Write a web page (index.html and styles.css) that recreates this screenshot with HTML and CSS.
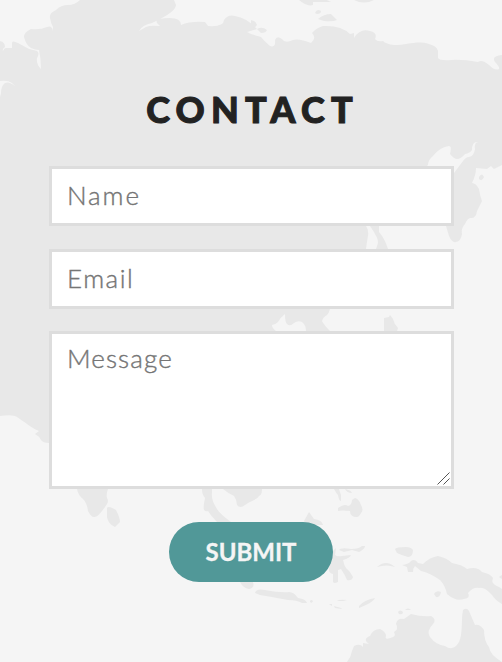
FILE: index.html
```html
<!DOCTYPE html>
<html lang="en">
<head>
<meta charset="utf-8">
<meta name="viewport" content="width=device-width, initial-scale=1">
<title>Contact</title>
<link rel="stylesheet" href="styles.css">
</head>
<body>
<section class="contact">
  <svg class="map" viewBox="0 0 502 662" aria-hidden="true">
    <!-- Asia -->
    <path d="M80 0Q75 5 68 5Q61 5 56 10Q49 13 50 18Q51 24 53 27V31Q52 25 47 27Q40 30 31 29Q24 32 24 37Q26 45 31 48Q35 50 39 50Q41 59 41 69Q36 64 37 58Q40 53 37 51L29 49Q22 45 18 43Q12 40 12 43V48H6Q4 48 3 51Q2 49 5 47Q5 42 0 41V81Q8 80 12 83L15 86Q9 81 5 83Q1 86 1 93L0 97V416Q13 414 17 417C25 422 31 428 39 431L35 434Q39 436 41 440Q43 443 49 443L77 489Q78 495 83 499Q87 503 88 511Q91 517 94 517Q98 518 107 504Q109 501 107 498Q106 494 108 489H202Q202 495 205 498Q203 507 204 510Q206 512 208 511Q211 516 217 522L240 582Q243 588 249 589Q255 588 253 582L231 522Q220 514 217 509Q211 500 212 493V489H223Q229 494 234 496Q237 500 237 505Q240 509 245 505C251 500 257 500 259 496Q262 495 262 489L276 331Q272 328 272 325Q275 325 278 322Q281 317 285 314Q285 322 287 324Q290 327 294 323Q298 320 302 322Q306 325 306 331H330Q324 325 322 321Q323 317 327 315Q329 313 330 309L366 249Q367 241 368 236Q369 230 366 226L428 165Q428 160 433 156Q440 147 449 146Q452 146 450 154Q454 159 457 159Q461 159 465 154Q470 153 472 150Q472 141 478 142Q474 143 475 149Q474 156 469 157Q466 157 463 161L454 173L446 226L449 236Q452 243 456 242Q461 241 462 234Q461 228 465 224Q467 219 470 218Q476 219 477 211L482 201Q480 196 479 189Q476 183 472 183Q476 175 476 168L487 169L491 166L494 169L502 165V55Q491 56 495 62Q500 67 499 69Q495 71 489 65Q482 59 478 62Q461 59 451 60Q440 61 438 58V51Q437 46 429 44C417 40 408 45 394 45Q386 44 383 41Q377 42 375 39Q378 33 370 31Q360 28 354 38V33L350 34Q341 25 323 26Q316 28 312 33Q317 38 311 43Q299 38 293 40Q285 44 282 39Q277 35 275 40Q276 48 270 46Q264 41 261 37L251 34L247 32L257 29Q247 18 235 16Q228 14 224 20Q224 27 208 26L205 22Q190 21 181 25Q181 18 170 18Q154 18 157 23L160 26Q150 25 146 27L139 31Q142 25 152 23Q176 12 176 5L174 0Z"/>
    <path d="M370 226Q379 239 378 243L376 249H388Q385 239 379 232V226Z"/>
    <path d="M107 508Q108 505 116 510Q120 518 120 522L115 527Q108 524 107 517Z"/>
    <!-- Arctic islands -->
    <path d="M299 0Q307 7 313 5L313 2L331 2L327 0ZM354 0Q364 5 374 0ZM251 20Q256 21 257 25Q254 29 251 28ZM257 29Q262 26 267 30Q266 33 261 33ZM315 13Q317 8 321 11Q321 14 317 14ZM318 19Q324 14 331 14L337 20Q333 22 324 21Z"/>
    <!-- Taiwan, Sakhalin and the Philippines -->
    <path d="M384 331V318L389 317L390 315L393 319Q394 324 398 328L397 331ZM479 177Q482 172 484 177Q482 182 479 179ZM334 489Q336 493 338 495Q339 501 341 501V495L339 489ZM345 489Q351 490 352 493Q347 493 345 489ZM338 508Q345 503 348 506Q352 505 352 500L355 498Q359 499 361 505Q364 510 361 513Q359 517 357 517Q350 517 350 511Q341 510 338 511ZM304 521L309 512L314 519Q322 520 323 525H306Z"/>
    <!-- Indonesia -->
    <path d="M330 556Q332 552 333 551L336 548L335 555Q337 557 342 556L351 555Q350 558 343 560Q344 565 346 568Q350 571 353 577Q352 581 347 580Q345 575 341 569L338 570V582Q334 584 333 582V574Q329 573 329 570ZM339 550Q341 547 351 549Q359 549 362 546L365 546Q365 549 359 552L352 550L344 552ZM255 593Q256 588 265 590Q281 593 289 592Q294 592 298 598Q306 599 307 603H302Q297 600 288 600Q267 596 260 595ZM310 601Q311 599 313 601Q312 604 310 602ZM329 604H332V606ZM337 601Q339 599 347 600L343 601ZM334 606L341 608L342 609L335 608ZM359 606Q364 600 375 598Q374 602 359 608ZM377 567Q386 559 395 567Q387 564 377 567Z"/>
    <path d="M395 549Q396 547 406 547Q411 547 413 550Q413 557 408 557Q401 555 397 553ZM402 565Q409 564 411 561Q415 558 418 563L423 564Q430 557 438 556Q447 558 452 563Q463 565 467 569Q477 566 482 572Q491 574 493 578Q490 584 499 587L502 589V604Q495 600 492 595Q484 586 479 588Q473 587 468 593Q471 598 464 599Q456 602 447 594Q445 585 440 580Q430 573 421 571L415 566Q413 568 413 572H408L407 567ZM434 594Q436 590 441 592Q440 598 436 597ZM499 577L502 575V579ZM398 612Q400 609 403 612Q403 615 399 614ZM405 610Q408 607 411 610Z"/>
    <!-- Australia -->
    <path d="M347 662Q351 657 352 651L354 646Q360 643 363 647V643L369 644Q362 639 370 636Q373 629 380 629Q386 632 386 636Q384 641 393 637Q396 636 394 632Q399 629 396 624Q397 618 404 619L411 614Q422 617 431 616Q437 619 433 624Q426 631 430 637Q436 645 445 646Q453 652 459 642C463 634 461 620 463 610Q467 607 469 611L475 625Q480 624 484 630Q484 641 489 647Q490 655 502 662Z"/>
  </svg>
  <form class="form">
    <h2 class="title">CONTACT</h2>
    <input class="field name" type="text" placeholder="Name" aria-label="Name">
    <input class="field email" type="email" placeholder="Email" aria-label="Email">
    <div class="message-wrap">
      <textarea class="field message" placeholder="Message" aria-label="Message"></textarea>
      <svg class="grip" viewBox="0 0 13 13" aria-hidden="true"><path d="M.5 12.5l12-12M6.500 12.500l6-6"/></svg>
    </div>
    <button class="submit" type="button">SUBMIT</button>
  </form>
</section>
</body>
</html>
```
FILE: styles.css
```css
* {
  box-sizing: border-box;
}

body {
  margin: 0;
  background: #f5f5f5;
  font-family: Lato, "Liberation Sans", sans-serif;
}

.contact {
  position: relative;
  width: 502px;
  height: 662px;
  overflow: hidden;
}

/* Decorative backdrop behind the form */
.map {
  position: absolute;
  inset: 0;
  width: 100%;
  height: 100%;
  fill: #e8e8e8;
}

.form {
  position: relative;
  display: flex;
  flex-direction: column;
  align-items: center;
  padding: 87px 48px 0 49px;
}

.title {
  margin: 0 0 35px;
  color: #222;
  font-size: 36px;
  font-weight: 900;
  line-height: 44px;
  letter-spacing: 6.2px;
  text-indent: 2px;
  white-space: nowrap;
  -webkit-text-stroke: 1px #222;
}

.field {
  display: block;
  width: 100%;
  height: 60px;
  margin: 0 0 23px;
  padding: 0 15px 2px;
  border: 3px solid #ddd;
  border-radius: 0;
  outline: 0;
  background: #fff;
  color: #222;
  font-family: inherit;
  font-size: 26px;
  font-weight: 300;
  letter-spacing: 1.1px;
}

.name {
  letter-spacing: 1.9px;
}

.email {
  letter-spacing: 1.5px;
}

.field::placeholder {
  color: #757575;
  opacity: 1;
  -webkit-text-stroke: 0.4px #757575;
}

.message-wrap {
  position: relative;
  width: 100%;
  margin: -1px 0 33px;
}

.message {
  height: 158px;
  margin: 0;
  padding-top: 7px;
  line-height: 34px;
  resize: none;
}

.grip {
  position: absolute;
  right: 4px;
  bottom: 4px;
  width: 13px;
  height: 13px;
  fill: none;
  stroke: #555;
  stroke-width: 1;
  pointer-events: none;
}

.submit {
  width: 164px;
  height: 60px;
  margin-right: 1px;
  padding: 0 0 2px;
  border: 0;
  border-radius: 30px;
  background: #519898;
  color: #f5f5f5;
  font-family: inherit;
  font-size: 24px;
  font-weight: 700;
  -webkit-text-stroke: 0.3px #f5f5f5;
}
```
